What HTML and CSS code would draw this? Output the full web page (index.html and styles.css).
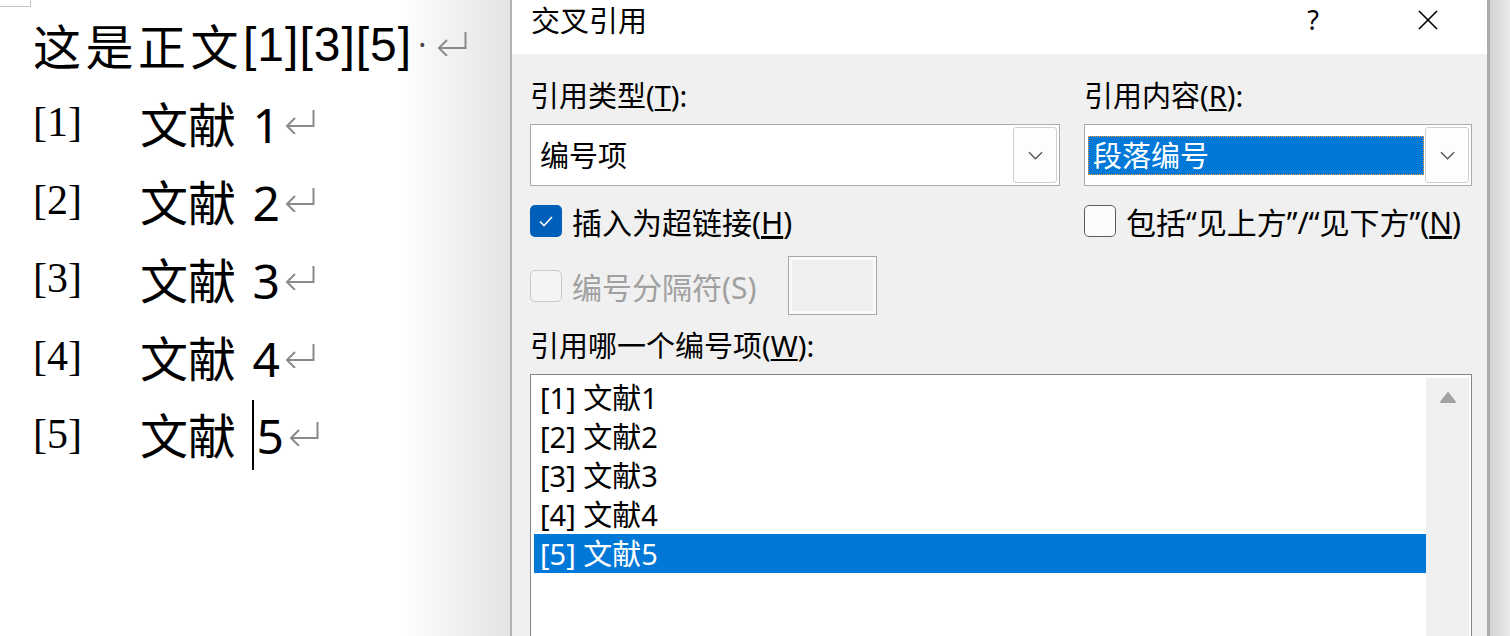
FILE: index.html
```html
<!DOCTYPE html>
<html lang="zh-CN">
<head>
<meta charset="utf-8">
<title>交叉引用</title>
<link rel="stylesheet" href="styles.css">
</head>
<body>
<div class="screen">
  <div class="doc">
    <div class="corner"></div>
    <div class="doc-lines">
      <div class="line line-main"><span class="main-cjk">这是正文</span><span class="main-refs">[1][3][5]</span><span class="dot">·</span><svg class="ret" viewBox="0 0 30 24"><path d="M28.5 0V16H2M10 8L2 16L10 24"/></svg></div>
      <div class="line"><span class="num">[1]</span><span class="txt">文献 1</span><svg class="ret" viewBox="0 0 30 24"><path d="M28.5 0V16H2M10 8L2 16L10 24"/></svg></div>
      <div class="line"><span class="num">[2]</span><span class="txt">文献 2</span><svg class="ret" viewBox="0 0 30 24"><path d="M28.5 0V16H2M10 8L2 16L10 24"/></svg></div>
      <div class="line"><span class="num">[3]</span><span class="txt">文献 3</span><svg class="ret" viewBox="0 0 30 24"><path d="M28.5 0V16H2M10 8L2 16L10 24"/></svg></div>
      <div class="line"><span class="num">[4]</span><span class="txt">文献 4</span><svg class="ret" viewBox="0 0 30 24"><path d="M28.5 0V16H2M10 8L2 16L10 24"/></svg></div>
      <div class="line"><span class="num">[5]</span><span class="txt">文献&nbsp;<span class="caret"></span>5</span><svg class="ret" viewBox="0 0 30 24"><path d="M28.5 0V16H2M10 8L2 16L10 24"/></svg></div>
    </div>
  </div>

  <div class="dialog">
    <div class="titlebar">
      <div class="title">交叉引用</div>
      <div class="help">?</div>
      <div class="close"><svg viewBox="0 0 20 20"><path d="M1 1L19 19M19 1L1 19"/></svg></div>
    </div>
    <div class="dlg-body">
      <div class="grid">
        <div class="label">引用类型(<u>T</u>):</div>
        <div class="label">引用内容(<u>R</u>):</div>

        <div class="combo">
          <div class="combo-value">编号项</div>
          <div class="combo-btn"><svg viewBox="0 0 16 9"><path d="M1 1L8 8L15 1"/></svg></div>
        </div>
        <div class="combo">
          <div class="combo-value selected">段落编号</div>
          <div class="combo-btn"><svg viewBox="0 0 16 9"><path d="M1 1L8 8L15 1"/></svg></div>
        </div>

        <div class="check">
          <span class="box checked"><svg viewBox="0 0 32 32"><path d="M10 16.5L14 20.5L22 12"/></svg></span>
          <span>插入为超链接(<u>H</u>)</span>
        </div>
        <div class="check">
          <span class="box"></span>
          <span>包括“见上方”/“见下方”(<u>N</u>)</span>
        </div>

        <div class="sep-row">
          <div class="check disabled">
            <span class="box"></span>
            <span>编号分隔符(S)</span>
          </div>
          <div class="textbox"></div>
        </div>

        <div class="label label-wide">引用哪一个编号项(<u>W</u>):</div>

        <div class="listbox">
          <div class="items">
            <div class="item">[1] 文献1</div>
            <div class="item">[2] 文献2</div>
            <div class="item">[3] 文献3</div>
            <div class="item">[4] 文献4</div>
            <div class="item active">[5] 文献5</div>
          </div>
          <div class="scrollbar"><svg viewBox="0 0 18 13"><path d="M9 2L16 11H2Z"/></svg></div>
        </div>
      </div>
    </div>
  </div>

  <div class="rshadow"></div>
</div>
</body>
</html>
```

FILE: styles.css
```css
html, body {
  margin: 0;
  padding: 0;
  background: #fff;
  overflow: hidden;
}

.screen {
  display: flex;
  width: 1510px;
  height: 636px;
  overflow: hidden;
}

/* ---------- document ---------- */
.doc {
  width: 510px;
  flex: none;
  background: linear-gradient(to right, #fff 0, #fff 400px, #e3e3e3 510px);
  font-family: "Noto Sans", "Noto Sans CJK SC", sans-serif;
  color: #000;
}

.corner {
  width: 30px;
  height: 6px;
  border-right: 1px solid #c4c4c4;
  border-bottom: 1px solid #c4c4c4;
}

.doc-lines {
  padding-left: 33px;
  margin-top: -2px;
}

.line {
  height: 78px;
  display: flex;
  align-items: center;
  font-size: 48px;
  white-space: nowrap;
}

.main-cjk {
  letter-spacing: 4.5px;
}

.main-refs {
  font-family: "Liberation Sans", sans-serif;
  letter-spacing: 1px;
}

.num {
  width: 107px;
  flex: none;
  font-family: "Liberation Serif", serif;
  font-size: 42px;
}

.txt {
  word-spacing: 4px;
  margin-right: 5px;
}

.dot {
  color: #444;
  font-size: 30px;
  margin: 0 11px 0 6px;
}

.ret {
  width: 30px;
  height: 24px;
  flex: none;
  fill: none;
  stroke: #8a8a8a;
  stroke-width: 2;
}

.caret {
  display: inline-block;
  width: 0;
  height: 70px;
  border-left: 2px solid #000;
  margin-right: 2px;
  vertical-align: -16px;
}

/* ---------- dialog ---------- */
.dialog {
  width: 975px;
  flex: none;
  border-left: 2px solid #b3b3b3;
  border-right: 3px solid #ababab;
  background: #f0f0f0;
  display: flex;
  flex-direction: column;
  font-family: "Noto Sans", "Noto Sans CJK SC", sans-serif;
  font-size: 29px;
  color: #000;
}

.titlebar {
  height: 54px;
  flex: none;
  background: #fff;
  display: flex;
  align-items: flex-start;
}

.title {
  flex: 1;
  padding-left: 19px;
  line-height: 42px;
}

.help {
  width: 112px;
  text-align: center;
  line-height: 40px;
  font-size: 27px;
}

.close {
  width: 118px;
  height: 40px;
  display: flex;
  align-items: center;
  justify-content: center;
}

.close svg {
  width: 20px;
  height: 20px;
  stroke: #000;
  stroke-width: 1.6;
  fill: none;
}

.dlg-body {
  flex: 1;
  padding: 22px 15px 0 18px;
}

.grid {
  display: grid;
  grid-template-columns: 530px 388px;
  column-gap: 24px;
}

.label {
  line-height: 40px;
  white-space: nowrap;
}

.label-wide {
  grid-column: 1 / -1;
  margin-top: 11px;
}

.combo {
  margin-top: 8px;
  height: 62px;
  box-sizing: border-box;
  border: 1px solid #ababab;
  background: #fff;
  display: flex;
  align-items: center;
  padding: 0 2px 0 3px;
}

.combo-value {
  flex: 1;
  padding-left: 6px;
  line-height: 39px;
  white-space: nowrap;
}

.combo-value.selected {
  height: 39px;
  box-sizing: border-box;
  background: #0078d7;
  color: #fff;
  outline: 1px dotted #e8a040;
  outline-offset: -1px;
  margin-right: 1px;
  padding-left: 5px;
}

.combo-btn {
  width: 44px;
  height: 56px;
  box-sizing: border-box;
  border: 1px solid #cfcfcf;
  border-radius: 3px;
  background: #fdfdfd;
  display: flex;
  align-items: center;
  justify-content: center;
}

.combo-btn svg {
  width: 15px;
  height: 9px;
  fill: none;
  stroke: #555;
  stroke-width: 1.4;
}

.check {
  margin-top: 15px;
  height: 40px;
  display: flex;
  align-items: center;
  gap: 10px;
  white-space: nowrap;
  font-size: 30px;
}

.box {
  width: 32px;
  height: 32px;
  box-sizing: border-box;
  flex: none;
  border: 1.5px solid #5c5c5c;
  border-radius: 5px;
  background: #fbfbfb;
}

.box.checked {
  border: none;
  background: #005fb8;
}

.box.checked svg {
  display: block;
  width: 32px;
  height: 32px;
  fill: none;
  stroke: #fff;
  stroke-width: 1.6;
}

.sep-row {
  grid-column: 1;
  margin-top: 15px;
  height: 59px;
  display: flex;
  align-items: center;
}

.sep-row .check {
  margin-top: 0;
  width: 258px;
}

.check.disabled {
  color: #a0a0a0;
}

.check.disabled .box {
  border-color: #c8c8c8;
  background: #f4f4f4;
}

.textbox {
  width: 89px;
  height: 59px;
  box-sizing: border-box;
  border: 1px solid #a8a8a8;
  background: #efefef;
  box-shadow: inset 0 0 0 3px #fafafa;
}

.listbox {
  grid-column: 1 / -1;
  margin-top: 8px;
  height: 300px;
  box-sizing: border-box;
  border: 1px solid #82878f;
  background: #fff;
  padding: 3px 2px 0 3px;
  display: flex;
}

.items {
  flex: 1;
}

.item {
  height: 39px;
  line-height: 39px;
  padding-left: 6px;
  white-space: nowrap;
}

.item.active {
  background: #0078d7;
  color: #fff;
}

.scrollbar {
  width: 43px;
  flex: none;
  background: #f0f0f0;
  display: flex;
  justify-content: center;
  align-items: flex-start;
}

.scrollbar svg {
  width: 18px;
  height: 13px;
  margin-top: 13px;
  fill: #a3a3a3;
  stroke: #a3a3a3;
  stroke-width: 2;
  stroke-linejoin: round;
}

.rshadow {
  width: 20px;
  flex: none;
  background: linear-gradient(to right, #d2d2d2, #ebebeb);
}
```
